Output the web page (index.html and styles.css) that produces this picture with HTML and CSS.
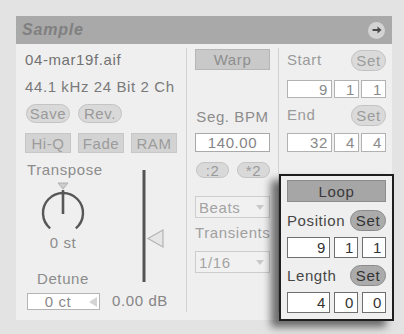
FILE: index.html
```html
<!DOCTYPE html>
<html>
<head>
<meta charset="utf-8">
<link rel="stylesheet" href="styles.css">
</head>
<body>
<div class="panel">
  <div class="header">
    <span class="title">Sample</span>
    <span class="hbtn"><svg width="12" height="10" viewBox="0 0 12 10"><path d="M1.5 5 H8" stroke="#4a4a4a" stroke-width="2"/><path d="M6.5 1.5 L10.5 5 L6.5 8.5 Z" fill="#4a4a4a"/></svg></span>
  </div>
  <div class="body">
    <div class="col col1">
      <div class="fname">04-mar19f.aif</div>
      <div class="info">44.1 kHz 24 Bit 2 Ch</div>
      <div class="btnrow pills">
        <span class="pill">Save</span>
        <span class="pill">Rev.</span>
      </div>
      <div class="btnrow toggles">
        <span class="tog">Hi-Q</span>
        <span class="tog">Fade</span>
        <span class="tog">RAM</span>
      </div>
      <div class="lower">
        <div class="tcol">
          <div class="lbl tlabel">Transpose</div>
          <svg class="knob" width="76" height="55" viewBox="0 0 76 55">
            <path d="M33 3 L43 3 L38 9 Z" fill="#cdcdcd" stroke="#b0b0b0" stroke-width="1"/>
            <path d="M25.14 48.32 A20 20 0 1 1 50.86 48.32" fill="none" stroke="#575757" stroke-width="2.4"/>
            <path d="M38 10 V34" stroke="#575757" stroke-width="2.6"/>
          </svg>
          <div class="lbl center">0 st</div>
          <div class="lbl center detune">Detune</div>
          <div class="ctbox">
            <span class="ctval">0 ct</span>
            <svg width="10" height="12" viewBox="0 0 10 12"><path d="M1 6 L9 1 L9 11 Z" fill="#d4d4d4"/></svg>
          </div>
        </div>
        <div class="vcol">
          <svg class="slider" width="64" height="124" viewBox="0 0 64 124">
            <path d="M36 8 V120" stroke="#555" stroke-width="3"/>
            <path d="M40 76.5 L55 68 L55 85 Z" fill="#e6e6e6" stroke="#b4b4b4" stroke-width="1.2"/>
          </svg>
          <div class="lbl center db">0.00 dB</div>
        </div>
      </div>
    </div>
    <div class="col col2">
      <div class="warp">Warp</div>
      <div class="lbl center segbpm">Seg. BPM</div>
      <div class="vbox bpm">140.00</div>
      <div class="halfrow">
        <span class="pill small">:2</span>
        <span class="pill small">*2</span>
      </div>
      <div class="dd beats"><span>Beats</span><svg width="10" height="7" viewBox="0 0 10 7"><path d="M1 1 L9 1 L5 6 Z" fill="#c9c9c9"/></svg></div>
      <div class="lbl transients">Transients</div>
      <div class="dd grid"><span>1/16</span><svg width="10" height="7" viewBox="0 0 10 7"><path d="M1 1 L9 1 L5 6 Z" fill="#c9c9c9"/></svg></div>
    </div>
    <div class="col col3">
      <div class="setrow start"><span class="lbl">Start</span><span class="set">Set</span></div>
      <div class="fields f-start"><span class="fld w1">9</span><span class="fld w2">1</span><span class="fld w2">1</span></div>
      <div class="setrow end"><span class="lbl">End</span><span class="set">Set</span></div>
      <div class="fields f-end"><span class="fld w1">32</span><span class="fld w2">4</span><span class="fld w2">4</span></div>
    </div>
  </div>
  <div class="loop">
    <div class="loopbtn">Loop</div>
    <div class="lsetrow pos"><span>Position</span><span class="lset">Set</span></div>
    <div class="lfields"><span class="lfld l1">9</span><span class="lfld l2">1</span><span class="lfld l2">1</span></div>
    <div class="lsetrow len"><span>Length</span><span class="lset">Set</span></div>
    <div class="lfields"><span class="lfld l1">4</span><span class="lfld l2">0</span><span class="lfld l2">0</span></div>
  </div>
</div>
</body>
</html>
```
FILE: styles.css
```css
html, body {
  margin: 0;
  padding: 0;
}
body {
  width: 404px;
  height: 334px;
  overflow: hidden;
  background: #e3e3e3;
  font-family: "Liberation Sans", Arial, sans-serif;
  font-size: 15px;
  letter-spacing: 0.6px;
  color: #8a8a8a;
}
.panel {
  position: relative;
  margin: 16px 0 0 16px;
  width: 376px;
}
.header {
  height: 28px;
  background: #a9a9a9;
  display: flex;
  align-items: center;
  justify-content: space-between;
  padding: 0 7px 0 6px;
  box-sizing: border-box;
}
.title {
  font-weight: bold;
  font-style: italic;
  font-size: 16px;
  color: #808080;
  letter-spacing: 0.8px;
}
.hbtn {
  width: 17px;
  height: 17px;
  border-radius: 50%;
  background: #d3d3d3;
  display: flex;
  align-items: center;
  justify-content: center;
}
.hbtn svg { display: block; }
.body {
  display: flex;
  height: 276px;
  box-sizing: border-box;
  padding: 4px 0 8px;
  background: #efefef;
}
.col {
  box-sizing: border-box;
  border-right: 1px solid #d2d2d2;
  display: flex;
  flex-direction: column;
}
.col1 { width: 171px; padding-left: 9px; }
.col2 { width: 92px; padding: 0 8px; }
.col3 { flex: 1; border-right: none; padding: 0 6px 0 8px; }

.lbl { line-height: 16px; color: #8c8c8c; white-space: nowrap; }
.center { text-align: center; }

.fname { padding-top: 2px; line-height: 20px; color: #727272; }
.info { margin-top: 7px; line-height: 20px; color: #7a7a7a; white-space: nowrap; }

.btnrow { display: flex; }
.pills { margin-top: 7px; height: 19px; gap: 8px; padding-left: 1px; }
.pill {
  box-sizing: border-box;
  width: 44px;
  height: 19px;
  border-radius: 10px;
  background: #d9d9d9;
  border: 1px solid #c4c4c4;
  color: #999;
  display: flex;
  align-items: center;
  justify-content: center;
  line-height: 1;
}
.toggles { margin-top: 10px; height: 20px; gap: 7px; }
.tog {
  box-sizing: border-box;
  width: 46px;
  height: 20px;
  background: #d3d3d3;
  border: 1px solid #c7c7c7;
  color: #9c9c9c;
  display: flex;
  align-items: center;
  justify-content: center;
}

.lower { margin-top: 9px; display: flex; }
.tcol { width: 76px; display: flex; flex-direction: column; }
.tlabel { padding-left: 2px; }
.knob { display: block; margin-top: 2px; }
.detune { margin-top: 20px; }
.ctbox {
  box-sizing: border-box;
  margin: 6px 0 0 2px;
  width: 73px;
  height: 17px;
  background: #fff;
  border: 1px solid #b4b4b4;
  display: flex;
  align-items: center;
  color: #8a8a8a;
}
.ctval { flex: 1; text-align: center; line-height: 15px; }
.ctbox svg { display: block; margin-right: 1px; }
.vcol { margin-left: 7px; width: 64px; display: flex; flex-direction: column; }
.slider { display: block; }
.db { margin-top: 7px; color: #858585; }

.warp {
  box-sizing: border-box;
  margin-top: 1px;
  height: 21px;
  background: #c9c9c9;
  border: 1px solid #b6b6b6;
  color: #8e8e8e;
  display: flex;
  align-items: center;
  justify-content: center;
}
.segbpm { margin-top: 39px; }
.vbox {
  box-sizing: border-box;
  height: 19px;
  background: #fff;
  border: 1px solid #a9a9a9;
  display: flex;
  align-items: center;
  justify-content: center;
  color: #858585;
}
.bpm { margin-top: 8px; }
.halfrow { margin-top: 10px; display: flex; gap: 8px; padding-left: 1px; }
.pill.small { width: 33px; height: 16px; border-radius: 8px; }
.dd {
  box-sizing: border-box;
  height: 22px;
  border: 1px solid #cdcdcd;
  background: #f1f1f1;
  display: flex;
  align-items: center;
  justify-content: space-between;
  padding: 0 4px 0 3px;
  color: #a3a3a3;
}
.dd svg { display: block; }
.beats { margin-top: 18px; }
.transients { margin-top: 7px; color: #a0a0a0; }
.grid { margin-top: 10px; }

.setrow {
  height: 22px;
  display: flex;
  align-items: center;
  justify-content: space-between;
}
.setrow .lbl { color: #9a9a9a; }
.start { margin-top: 1px; }
.end { margin-top: 6px; }
.set {
  box-sizing: border-box;
  width: 35px;
  height: 21px;
  border-radius: 11px;
  background: #dadada;
  border: 1px solid #c2c2c2;
  color: #9c9c9c;
  display: flex;
  align-items: center;
  justify-content: center;
}
.fields { display: flex; gap: 2px; }
.f-start { margin-top: 9px; height: 18px; }
.f-end { margin-top: 7px; height: 19px; }
.fld {
  box-sizing: border-box;
  background: #fff;
  border: 1px solid #b2b2b2;
  padding-right: 3px;
  display: flex;
  align-items: center;
  justify-content: flex-end;
  color: #8a8a8a;
}
.w1 { width: 45px; }
.w2 { width: 25px; }

.loop {
  position: absolute;
  left: 263px;
  top: 158px;
  width: 115px;
  height: 147px;
  box-sizing: border-box;
  border: 2px solid #1e1e1e;
  background: #efefef;
  padding: 2px 6px 6px;
  box-shadow: -8px 6px 8px rgba(0, 0, 0, 0.55);
  display: flex;
  flex-direction: column;
  color: #444;
}
.loopbtn {
  box-sizing: border-box;
  margin-top: 2px;
  height: 22px;
  background: #a6a6a6;
  border: 1px solid #8c8c8c;
  color: #3a3a3a;
  display: flex;
  align-items: center;
  justify-content: center;
}
.lsetrow {
  height: 21px;
  display: flex;
  align-items: center;
  justify-content: space-between;
  color: #474747;
  white-space: nowrap;
}
.pos { margin-top: 8px; }
.len { margin-top: 7px; }
.lset {
  box-sizing: border-box;
  width: 36px;
  height: 21px;
  border-radius: 11px;
  background: #ababab;
  border: 1px solid #8a8a8a;
  color: #333;
  display: flex;
  align-items: center;
  justify-content: center;
}
.lfields { margin-top: 6px; height: 21px; display: flex; gap: 4px; }
.lfld {
  box-sizing: border-box;
  background: #fff;
  border: 1px solid #6f6f6f;
  display: flex;
  align-items: center;
  justify-content: flex-end;
  padding-right: 3px;
  color: #333;
}
.l1 { width: 43px; }
.l2 { width: 24px; }
```
